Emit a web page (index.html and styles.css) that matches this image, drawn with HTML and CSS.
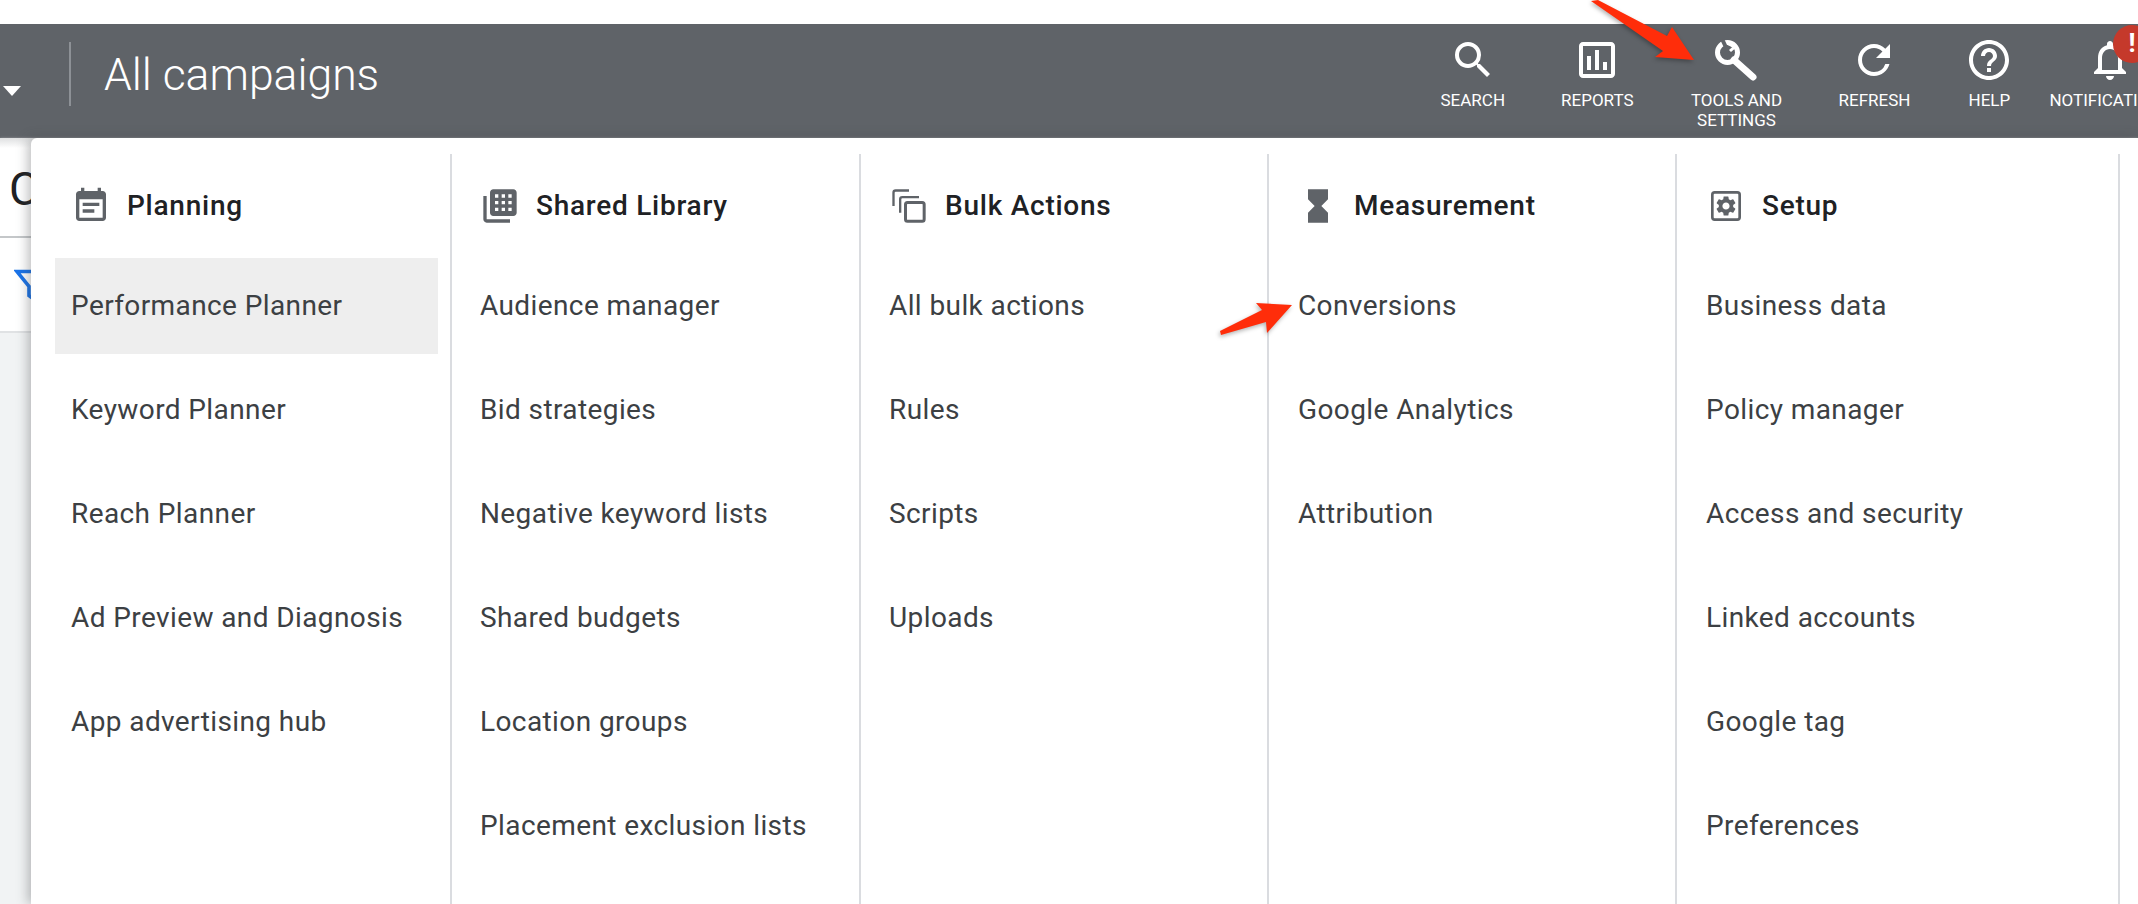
FILE: index.html
```html
<!DOCTYPE html>
<html lang="en">
<head>
<meta charset="utf-8">
<title>All campaigns</title>
<link rel="stylesheet" href="styles.css">
</head>
<body>
<div class="page">
  <div class="topgap"></div>
  <header class="bar">
    <div class="bar-left">
      <span class="caret"></span>
      <span class="vline"></span>
      <h1 class="title">All campaigns</h1>
    </div>
    <nav class="tools">
      <a class="tool">
        <svg class="tool-icon" viewBox="0 0 24 24"><path d="M15.5 14h-.79l-.28-.27A6.471 6.471 0 0 0 16 9.5 6.5 6.5 0 1 0 9.5 16c1.61 0 3.09-.59 4.23-1.57l.27.28v.79l5 4.99L20.49 19l-4.99-5zm-6 0C7.01 14 5 11.99 5 9.5S7.01 5 9.5 5 14 7.01 14 9.5 11.99 14 9.5 14z"/></svg>
        <span>SEARCH</span>
      </a>
      <a class="tool">
        <svg class="tool-icon" viewBox="0 0 24 24"><path d="M19 3H5c-1.1 0-2 .9-2 2v14c0 1.1.9 2 2 2h14c1.1 0 2-.9 2-2V5c0-1.1-.9-2-2-2zm0 16H5V5h14v14zM7 10h2v7H7zm4-3h2v10h-2zm4 6h2v4h-2z"/></svg>
        <span>REPORTS</span>
      </a>
      <a class="tool tool-wide">
        <svg class="tool-icon" viewBox="0 0 48 48">
          <circle class="wrench-line" cx="14.500" cy="16.500" r="10"/>
          <path class="wrench-handle" d="M21 24 40 41"/>
          <path class="wrench-slot" d="M9.500 4 14.500 14.500"/>
          <path class="wrench-jaw" d="M15 7.500 21.500 11 17 15"/>
        </svg>
        <span>TOOLS AND SETTINGS</span>
      </a>
      <a class="tool tool-refresh">
        <svg class="tool-icon" viewBox="0 0 24 24"><path d="M17.65 6.35A7.958 7.958 0 0 0 12 4c-4.42 0-7.99 3.58-7.99 8s3.57 8 7.99 8c3.73 0 6.84-2.55 7.73-6h-2.08A5.99 5.99 0 0 1 12 18c-3.31 0-6-2.69-6-6s2.69-6 6-6c1.66 0 3.14.69 4.22 1.78L13 11h7V4l-2.35 2.35z"/></svg>
        <span>REFRESH</span>
      </a>
      <a class="tool tool-help">
        <svg class="tool-icon" viewBox="0 0 24 24"><path d="M11 18h2v-2h-2v2zm1-16C6.48 2 2 6.48 2 12s4.48 10 10 10 10-4.48 10-10S17.52 2 12 2zm0 18c-4.41 0-8-3.59-8-8s3.59-8 8-8 8 3.59 8 8-3.59 8-8 8zm0-14c-2.21 0-4 1.79-4 4h2c0-1.1.9-2 2-2s2 .9 2 2c0 2-3 1.75-3 5h2c0-2.25 3-2.5 3-5 0-2.21-1.79-4-4-4z"/></svg>
        <span>HELP</span>
      </a>
      <a class="tool tool-notify">
        <svg class="tool-icon" viewBox="0 0 24 24"><path d="M12 22c1.1 0 2-.9 2-2h-4c0 1.1.9 2 2 2zm6-6v-5c0-3.07-1.63-5.64-4.5-6.32V4c0-.83-.67-1.5-1.5-1.5s-1.5.67-1.5 1.5v.68C7.64 5.36 6 7.92 6 11v5l-2 2v1h16v-1l-2-2zm-2 1H8v-6c0-2.48 1.51-4.5 4-4.5s4 2.02 4 4.5v6z"/></svg>
        <span>NOTIFICATIONS</span>
        <b class="badge">!</b>
      </a>
    </nav>
  </header>

  <main class="under">
    <div class="under-top">
      <span class="under-c">C</span>
    </div>
    <div class="under-filter">
      <svg class="funnel" viewBox="0 0 24 24"><path d="M2 3h20l-8 10v9l-4-3v-6z" fill="none" stroke="#1a73e8" stroke-width="2.4"/></svg>
    </div>
    <div class="under-body"></div>

    <section class="panel">
      <div class="col col-first">
        <h2 class="col-head">
          <svg class="col-icon" viewBox="0 0 24 24"><path d="M17 10H7v2h10v-2zm2-7h-1V1h-2v2H8V1H6v2H5c-1.11 0-1.99.9-1.99 2L3 19c0 1.1.89 2 2 2h14c1.1 0 2-.9 2-2V5c0-1.1-.9-2-2-2zm0 16H5V8h14v11zm-5-5H7v2h7v-2z"/></svg>
          <span>Planning</span>
        </h2>
        <ul class="items">
          <li class="item item-on">Performance Planner</li>
          <li class="item">Keyword Planner</li>
          <li class="item">Reach Planner</li>
          <li class="item">Ad Preview and Diagnosis</li>
          <li class="item">App advertising hub</li>
        </ul>
      </div>
      <div class="col">
        <h2 class="col-head">
          <svg class="col-icon" viewBox="0 0 24 24"><path fill-rule="evenodd" d="M4 6H2v14c0 1.1.9 2 2 2h14v-2H4V6zm16-4H8c-1.1 0-2 .9-2 2v12c0 1.1.9 2 2 2h12c1.1 0 2-.9 2-2V4c0-1.1-.9-2-2-2zM9 5h2v2H9zm4 0h2v2h-2zm4 0h2v2h-2zM9 9h2v2H9zm4 0h2v2h-2zm4 0h2v2h-2zM9 13h2v2H9zm4 0h2v2h-2zm4 0h2v2h-2z"/></svg>
          <span>Shared Library</span>
        </h2>
        <ul class="items">
          <li class="item">Audience manager</li>
          <li class="item">Bid strategies</li>
          <li class="item">Negative keyword lists</li>
          <li class="item">Shared budgets</li>
          <li class="item">Location groups</li>
          <li class="item">Placement exclusion lists</li>
        </ul>
      </div>
      <div class="col col-third">
        <h2 class="col-head">
          <svg class="col-icon" viewBox="0 0 24 24"><path d="M2 12V4a2 2 0 0 1 2-2h8v1.400H4a.6.6 0 0 0-.6.6v8zM6 16V8a2 2 0 0 1 2-2h10v1.400H8a.6.6 0 0 0-.6.6v8z"/><rect x="9.900" y="9.900" width="11.200" height="11.200" rx="1.200" fill="none" stroke="#5f6368" stroke-width="1.800"/></svg>
          <span>Bulk Actions</span>
        </h2>
        <ul class="items">
          <li class="item">All bulk actions</li>
          <li class="item">Rules</li>
          <li class="item">Scripts</li>
          <li class="item">Uploads</li>
        </ul>
      </div>
      <div class="col col-fourth">
        <h2 class="col-head">
          <svg class="col-icon" viewBox="0 0 24 24"><path d="M6 2v6h.01L6 8.010 10 12l-4 4 .01.01H6V22h12v-5.990h-.01L18 16l-4-4 4-3.990-.01-.01H18V2H6z"/></svg>
          <span>Measurement</span>
        </h2>
        <ul class="items">
          <li class="item">Conversions</li>
          <li class="item">Google Analytics</li>
          <li class="item">Attribution</li>
        </ul>
      </div>
      <div class="col col-last">
        <h2 class="col-head">
          <svg class="col-icon" viewBox="0 0 24 24"><rect x="3.800" y="3.800" width="16.400" height="16.400" rx="1.400" fill="none" stroke="#5f6368" stroke-width="1.600"/><path transform="translate(12 12) scale(.6) translate(-12 -12)" d="M19.14 12.94c.04-.3.06-.61.06-.94 0-.32-.02-.64-.07-.94l2.03-1.58a.49.49 0 0 0 .12-.61l-1.92-3.32a.488.488 0 0 0-.59-.22l-2.39.96c-.5-.38-1.03-.7-1.62-.94l-.36-2.54a.484.484 0 0 0-.48-.41h-3.84c-.24 0-.43.17-.47.41l-.36 2.54c-.59.24-1.13.57-1.62.94l-2.39-.96c-.22-.08-.47 0-.59.22L2.74 8.87c-.12.21-.08.47.12.61l2.03 1.58c-.05.3-.09.63-.09.94s.02.64.07.94l-2.03 1.58a.49.49 0 0 0-.12.61l1.92 3.32c.12.22.37.29.59.22l2.39-.96c.5.38 1.03.7 1.62.94l.36 2.54c.05.24.24.41.48.41h3.84c.24 0 .44-.17.47-.41l.36-2.54c.59-.24 1.13-.56 1.62-.94l2.39.96c.22.08.47 0 .59-.22l1.92-3.32c.12-.22.07-.47-.12-.61l-2.01-1.58zM12 15.6c-1.98 0-3.6-1.62-3.6-3.6s1.62-3.6 3.6-3.6 3.6 1.62 3.6 3.6-1.62 3.6-3.6 3.6z"/></svg>
          <span>Setup</span>
        </h2>
        <ul class="items">
          <li class="item">Business data</li>
          <li class="item">Policy manager</li>
          <li class="item">Access and security</li>
          <li class="item">Linked accounts</li>
          <li class="item">Google tag</li>
          <li class="item">Preferences</li>
        </ul>
      </div>
    </section>
  </main>

  <svg class="arrows" viewBox="0 0 2138 904">
    <path class="arrow" d="M1591 1 1598 0 1667 36 1672 27 1694 60 1655 57 1663 51Z"/>
    <path class="arrow" d="M1220 331 1262 310 1256 303 1292 305 1267 333 1266 322 1221 335Z"/>
  </svg>
</div>
</body>
</html>
```
FILE: styles.css
```css
* { box-sizing: border-box; }
html, body { margin: 0; padding: 0; }
body {
  width: 2138px;
  height: 904px;
  overflow: hidden;
  background: #fff;
  font-family: Roboto, "Liberation Sans", sans-serif;
}
.page { position: relative; width: 2138px; height: 904px; overflow: hidden; display: flex; flex-direction: column; }
.topgap { height: 24px; flex: none; background: #fff; }

.bar {
  flex: none;
  height: 114px;
  background: #5f6368;
  color: #fff;
  display: flex;
  overflow: hidden;
  position: relative;
}
.bar-left { width: 1412.5px; flex: none; position: relative; display: flex; align-items: flex-start; padding-left: 3px; }
.caret {
  flex: none;
  margin-top: 62px;
  width: 0; height: 0;
  border-left: 9.5px solid transparent;
  border-right: 9.5px solid transparent;
  border-top: 10px solid #fff;
}
.vline { flex: none; width: 2px; height: 64px; margin: 18px 0 0 48px; background: #8d9196; }
.title { margin: 0 0 0 33px; padding-top: 26px; font-size: 44.5px; line-height: 50px; font-weight: 300; white-space: nowrap; }

.tools { display: flex; flex: none; }
.tool {
  display: flex; flex-direction: column; align-items: center;
  padding: 12px 28px 0;
  font-size: 17px; line-height: 20px;
  text-align: center;
  position: relative;
  flex: none;
}
.tool-icon { width: 48px; height: 48px; fill: #fff; display: block; margin-bottom: 6px; flex: none; }
.tool-wide { width: 150px; }
.tool-refresh { padding: 12px 27px 0; }
.tool-help { width: 104px; padding: 12px 0 0; }
.tool-notify { padding: 12px 0 0 8px; }
.wrench-line { fill: none; stroke: #fff; stroke-width: 5; }
.wrench-handle { fill: none; stroke: #fff; stroke-width: 7; stroke-linecap: round; }
.wrench-slot { fill: none; stroke: #5f6368; stroke-width: 4; }
.wrench-jaw { fill: none; stroke: #fff; stroke-width: 3; }
.badge {
  position: absolute;
  left: 71.5px; top: 1px;
  width: 38px; height: 38px;
  border-radius: 50%;
  background: #c5392b;
  color: #fff;
  font-size: 26px; line-height: 36px; font-weight: 700;
  text-align: center;
}

.under { flex: 1; position: relative; display: flex; flex-direction: column; }
.under-top {
  height: 100px; flex: none;
  border-bottom: 2px solid #c4c7c9;
  background: linear-gradient(#dfe0e1, #fff 10px);
  box-shadow: 0 1px 3px #d5d7d9;
  padding: 26px 0 0 9px;
}
.under-c { font-size: 46px; line-height: 50px; color: #202124; }
.under-filter { height: 95px; flex: none; border-bottom: 2px solid #e0e2e4; padding: 29px 0 0 14px; background: #fff; }
.funnel { width: 36px; height: 36px; display: block; }
.under-body { flex: 1; background: #f1f3f4; }

.panel {
  position: absolute;
  left: 31px; top: 0; right: 0; bottom: 0;
  background: #fff;
  border-top-left-radius: 6px;
  box-shadow: -3px 0 12px rgba(60, 64, 67, .35);
  display: flex;
  padding-top: 16px;
}
.col { width: 409px; flex: none; border-right: 2px solid #dadce0; padding: 0 8px 0 12px; }
.col-first { width: 421px; padding-left: 24px; padding-right: 12px; }
.col-third { width: 408px; }
.col-fourth { width: 408px; padding-left: 13px; }
.col-last { width: 443px; padding-left: 13px; }
.col-head {
  margin: 0;
  display: flex; align-items: center;
  height: 104px;
  padding: 0 0 0 16px;
  font-size: 28px; line-height: 34px; font-weight: 500; color: #202124;
  letter-spacing: .75px;
}
.col-icon { width: 40px; height: 40px; fill: #5f6368; flex: none; margin-right: 16px; }
.items { list-style: none; margin: 0; padding: 0; display: flex; flex-direction: column; gap: 8px; }
.item {
  height: 96px;
  padding: 0 16px 2px;
  display: flex; align-items: center;
  font-size: 28px; color: #3c4043;
  letter-spacing: .4px;
  white-space: nowrap;
}
.item-on { background: #eeeeee; }

.arrows { position: absolute; left: 0; top: 0; width: 2138px; height: 904px; pointer-events: none; overflow: visible; }
.arrow { fill: #ff2d0a; filter: drop-shadow(-1px 2px 2px rgba(0,0,0,.3)); }
```
